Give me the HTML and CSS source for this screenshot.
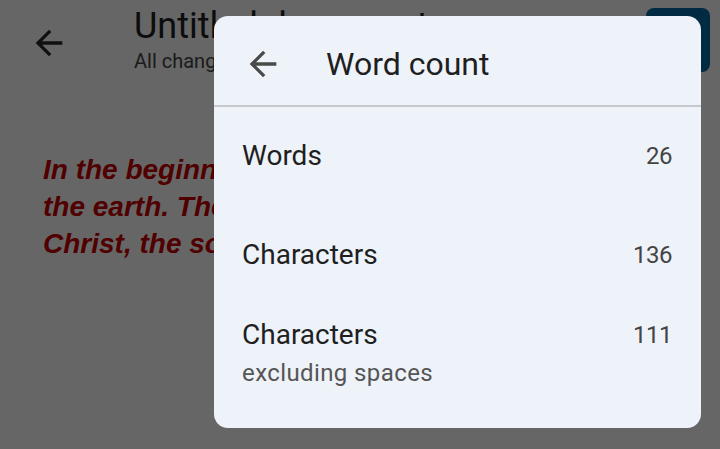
FILE: index.html
```html
<!DOCTYPE html>
<html>
<head>
<meta charset="utf-8">
<link rel="stylesheet" href="styles.css">
</head>
<body>
<div class="page">
  <header class="topbar">
    <button class="icon-btn page-back" aria-label="Back">
      <svg viewBox="0 0 24 24" width="40" height="40"><path d="M20 11H7.83l5.59-5.59L12 4l-8 8 8 8 1.41-1.41L7.83 13H20v-2z"/></svg>
    </button>
    <div class="doc-title">
      <div class="title">Untitled document</div>
      <div class="status">All changes saved</div>
    </div>
    <div class="action-btn"></div>
  </header>
  <div class="doc-body">
    <p class="verse"><span>In the beginning God created the heaven and</span><span>the earth. The Word became flesh in Jesus</span><span>Christ, the son of God, who came to save us all.</span></p>
  </div>
</div>
<div class="scrim"></div>
<section class="dialog">
  <div class="dialog-head">
    <button class="icon-btn dialog-back" aria-label="Back">
      <svg viewBox="0 0 24 24" width="40" height="40"><path d="M20 11H7.83l5.59-5.59L12 4l-8 8 8 8 1.41-1.41L7.83 13H20v-2z"/></svg>
    </button>
    <h1 class="dialog-title">Word count</h1>
  </div>
  <div class="dialog-body">
    <div class="row row-words">
      <div class="label">Words</div>
      <div class="value">26</div>
    </div>
    <div class="row row-chars">
      <div class="label">Characters</div>
      <div class="value">136</div>
    </div>
    <div class="row row-nospace">
      <div class="label-group">
        <div class="label">Characters</div>
        <div class="sublabel">excluding spaces</div>
      </div>
      <div class="value">111</div>
    </div>
  </div>
</section>
</body>
</html>
```

FILE: styles.css
```css
* { box-sizing: border-box; }
html, body {
  margin: 0;
  padding: 0;
  width: 720px;
  height: 449px;
  overflow: hidden;
  background: #ffffff;
  font-family: Roboto, "Noto Sans", sans-serif;
}
.page {
  width: 720px;
  height: 449px;
  overflow: hidden;
}
.topbar {
  display: flex;
  align-items: flex-start;
  height: 110px;
  padding: 8px 10px 0 29px;
}
.icon-btn {
  border: 0;
  padding: 0;
  margin: 0;
  background: transparent;
  display: flex;
  width: 40px;
  height: 40px;
}
.page-back {
  margin-top: 15px;
}
.page-back svg { fill: #2a2a2a; }
.doc-title {
  margin-left: 65px;
  flex: 1;
  color: #222;
  white-space: nowrap;
}
.title {
  font-size: 36px;
  line-height: 40px;
  margin-top: -2px;
}
.status {
  font-size: 20px;
  line-height: 24px;
  margin-top: 3px;
  color: #444;
}
.action-btn {
  width: 64px;
  height: 64px;
  border-radius: 8px;
  background: #0469a8;
}
.doc-body {
  padding: 41px 0 0 43px;
}
.verse {
  margin: 0;
  font-family: "Liberation Sans", Arial, sans-serif;
  font-weight: bold;
  font-style: italic;
  font-size: 28px;
  line-height: 37px;
  color: #c80000;
  white-space: nowrap;
}
.verse span { display: block; }

.scrim {
  position: fixed;
  inset: 0;
  background: rgba(0, 0, 0, 0.6);
}
.dialog {
  position: fixed;
  left: 214px;
  top: 16px;
  width: 487px;
  height: 412px;
  background: #eef2f9;
  border-radius: 14px;
  overflow: hidden;
  color: #1f1f1f;
}
.dialog-head {
  display: flex;
  align-items: center;
  height: 91px;
  padding: 6px 0 0 29px;
  border-bottom: 2px solid #c7c8cb;
}
.dialog-back svg { fill: #4a4a4a; }
.dialog-title {
  margin: 0 0 0 43px;
  font-weight: 400;
  font-size: 32px;
  line-height: 40px;
  color: #1f1f1f;
}
.dialog-body {
  padding: 31px 29px 0 28px;
}
.row {
  display: flex;
  justify-content: space-between;
  align-items: flex-start;
}
.row-chars { margin-top: 63px; }
.row-nospace { margin-top: 44px; }
.label {
  font-size: 28px;
  line-height: 36px;
  color: #1f1f1f;
}
.sublabel {
  margin-top: 6px;
  font-size: 24px;
  line-height: 28px;
  letter-spacing: 0.4px;
  color: #555;
}
.value {
  font-size: 24px;
  line-height: 36px;
  letter-spacing: -0.5px;
  color: #444;
}
```
